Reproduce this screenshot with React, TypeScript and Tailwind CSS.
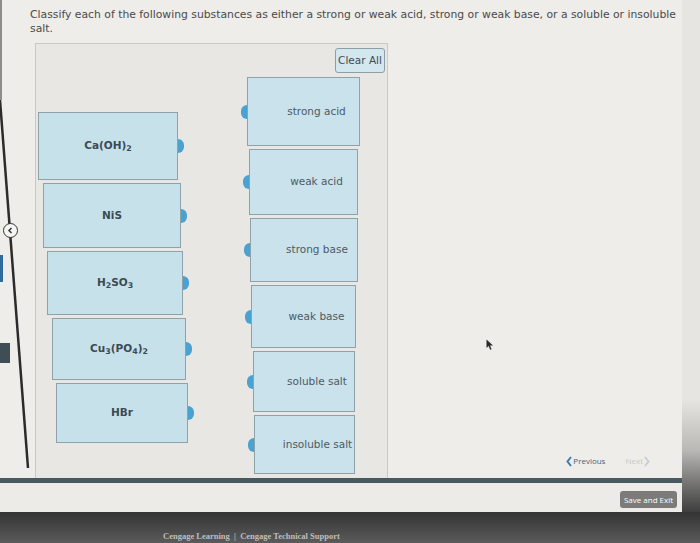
import React from 'react';

type Item = { key: string; label: React.ReactNode; cls: string };

// substances on the left, nudged right as they go down
const substances: Item[] = [
  { key: 'caoh2', label: <>Ca(OH)<sub>2</sub></>, cls: 'ml-[2px] w-[140px] h-[68px]' },
  { key: 'nis', label: <>NiS</>, cls: 'ml-[7px] w-[138px] h-[65px]' },
  { key: 'h2so3', label: <>H<sub>2</sub>SO<sub>3</sub></>, cls: 'ml-[11px] w-[136px] h-[64px]' },
  { key: 'cu3po42', label: <>Cu<sub>3</sub>(PO<sub>4</sub>)<sub>2</sub></>, cls: 'ml-[16px] w-[134px] h-[62px]' },
  { key: 'hbr', label: <>HBr</>, cls: 'ml-[20px] w-[132px] h-[60px]' },
];

const categories: Item[] = [
  { key: 'sa', label: 'strong acid', cls: 'ml-[6px] w-[113px] h-[69px]' },
  { key: 'wa', label: 'weak acid', cls: 'ml-[8px] w-[109px] h-[66px]' },
  { key: 'sb', label: 'strong base', cls: 'ml-[9px] w-[108px] h-[64px]' },
  { key: 'wb', label: 'weak base', cls: 'ml-[10px] w-[105px] h-[63px]' },
  { key: 'ss', label: 'soluble salt', cls: 'ml-[12px] w-[102px] h-[61px]' },
  { key: 'is', label: 'insoluble salt', cls: 'ml-[13px] w-[101px] h-[59px]' },
];

const SubstanceCard: React.FC<{ item: Item }> = ({ item }) => (
  <div className={`relative flex items-center justify-center bg-[#c7e1ea] border border-[#8fa2a9] text-[10.5px] font-bold text-[#3b4a55] ${item.cls}`}>
    <span>{item.label}</span>
    <span className="absolute -right-[7px] top-1/2 -translate-y-1/2 w-[6px] h-[14px] rounded-r-full bg-[#4aa2d0]" />
  </div>
);

const CategoryCard: React.FC<{ item: Item }> = ({ item }) => (
  <div className={`relative flex items-center justify-center pl-[26px] bg-[#c9e2eb] border border-[#8fa2a9] text-[10.5px] text-[#4d5b64] ${item.cls}`}>
    <span className="whitespace-nowrap">{item.label}</span>
    <span className="absolute -left-[7px] top-1/2 -translate-y-1/2 w-[6px] h-[14px] rounded-l-full bg-[#4aa2d0]" />
  </div>
);

export default function App() {
  return (
    <div className="relative w-[700px] h-[543px] overflow-hidden bg-[#eeede9] font-['DejaVu_Sans',sans-serif]">
      <div className="flex h-[512px]">
        <div className="w-[682px] flex flex-col">
          <div className="h-[478px] flex flex-col">
            <p className="ml-[30px] pt-[8px] w-[652px] text-[10.8px] leading-[14px] text-[#4a4a4a]">
              Classify each of the following substances as either a strong or weak acid, strong or weak base, or a soluble or insoluble salt.
            </p>

            <div className="flex flex-1 mt-[7px]">
              {/* drag and drop board */}
              <div className="ml-[35px] w-[353px] h-[435px] border-t border-x border-[#cac9c5] bg-[#e8e7e3] flex flex-col">
                <div className="flex justify-end pt-[4px] pr-[2px]">
                  <button className="w-[50px] h-[25px] rounded-[3px] border border-[#8d9fa6] bg-[#d3e7ee] text-[10.5px] text-[#3e4b53]">
                    Clear All
                  </button>
                </div>
                <div className="flex mt-[4px]">
                  <div className="w-[205px] mt-[35px] flex flex-col gap-[3px]">
                    {substances.map(s => <SubstanceCard key={s.key} item={s} />)}
                  </div>
                  <div className="flex flex-col gap-[3px]">
                    {categories.map(c => <CategoryCard key={c.key} item={c} />)}
                  </div>
                </div>
              </div>

              {/* question navigation */}
              <div className="flex-1 flex items-end justify-end pr-[32px] pb-[11px] font-['Open_Sans',sans-serif] text-[8px]">
                <div className="flex items-center gap-[1px] text-[#45627a]">
                  <svg width="6" height="11" viewBox="0 0 6 11">
                    <path d="M5 1 L1.5 5.5 L5 10" fill="none" stroke="#3a7db0" strokeWidth="2" />
                  </svg>
                  <span>Previous</span>
                </div>
                <div className="flex items-center gap-[1px] ml-[20px] text-[#c5c9cc]">
                  <span>Next</span>
                  <svg width="6" height="11" viewBox="0 0 6 11">
                    <path d="M1 1 L4.5 5.5 L1 10" fill="none" stroke="#c9ced2" strokeWidth="2" />
                  </svg>
                </div>
              </div>
            </div>
          </div>

          <div className="h-[5px] bg-[#48595f]" />
          <div className="flex-1 flex justify-end items-start pt-[8px] pr-[5px] bg-[#ecebe7]">
            <button className="w-[57px] h-[17px] rounded-[3px] bg-[#7b7b79] text-white text-[8px] font-['Open_Sans',sans-serif]">
              Save and Exit
            </button>
          </div>
        </div>
        <div className="flex-1 bg-gradient-to-b from-[#e6e5e2] from-[78%] via-[#b9b8b5] via-[88%] to-[#3e3e3e]" />
      </div>

      <footer className="h-[31px] bg-gradient-to-b from-[#343434] to-[#5b5b5b] pl-[163px] pt-[19px] font-['Liberation_Serif',serif] font-bold text-[8.5px] leading-[10px] text-[#bdbdbd]">
        Cengage Learning&nbsp;&nbsp;|&nbsp;&nbsp;Cengage Technical Support
      </footer>

      {/* window frame edge on the left */}
      <svg className="absolute left-0 top-0 pointer-events-none" width="40" height="480">
        <line x1="1" y1="0" x2="1" y2="100" stroke="#8c8c8c" strokeWidth="2" />
        <line x1="0" y1="100" x2="28" y2="468" stroke="#2b2b2b" strokeWidth="2.5" />
      </svg>
      <div className="absolute left-0 top-[255px] w-[3px] h-[27px] bg-[#2f6c9e]" />
      <div className="absolute left-0 top-[343px] w-[10px] h-[20px] bg-[#3f4e54]" />
      <div className="absolute left-[3px] top-[223px] w-[15px] h-[15px] rounded-full border-[1.5px] border-[#333] bg-[#f4f4f2] flex items-center justify-center">
        <svg width="7" height="7" viewBox="0 0 7 7">
          <path d="M4.5 1 L2 3.5 L4.5 6" fill="none" stroke="#333" strokeWidth="1.5" />
        </svg>
      </div>

      {/* mouse pointer */}
      <svg className="absolute left-[486px] top-[339px] pointer-events-none" width="8" height="12" viewBox="0 0 8 12">
        <path d="M0.5 0.5 L0.5 9 L2.6 7 L4.2 10.8 L5.6 10.2 L4 6.6 L7 6.6 Z" fill="#2a2a2a" />
      </svg>
    </div>
  );
}
